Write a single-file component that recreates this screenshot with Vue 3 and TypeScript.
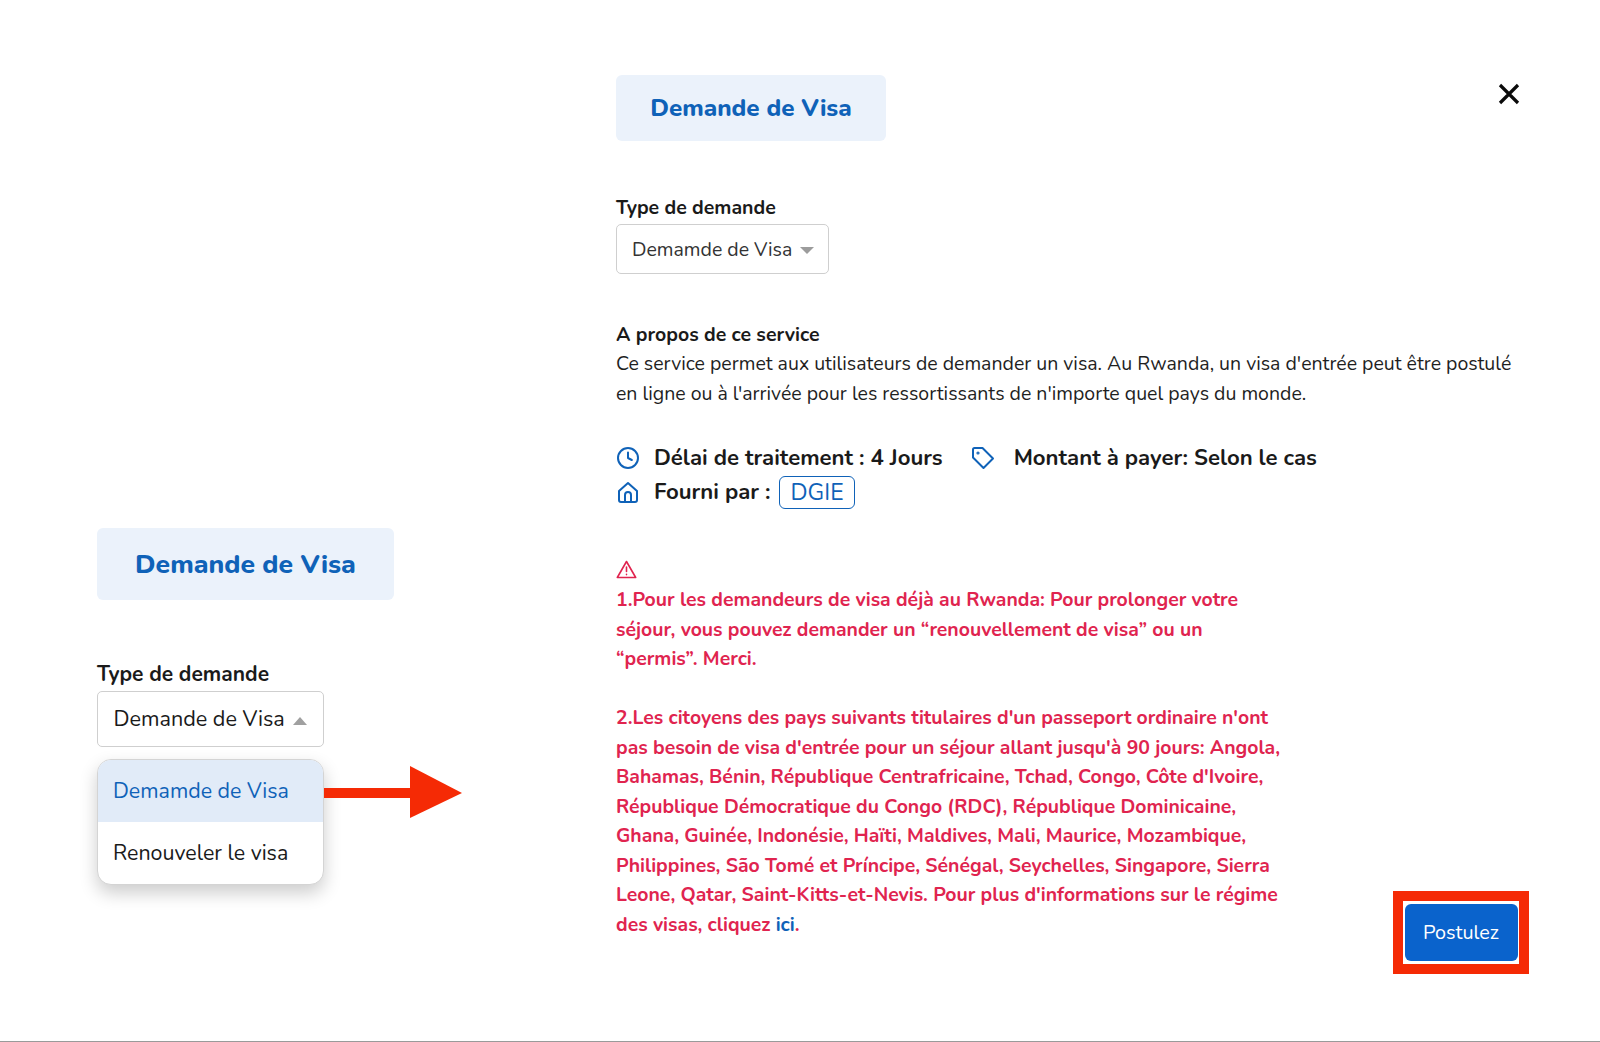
<script setup lang="ts">
const service = "Ce service permet aux utilisateurs de demander un visa. Au Rwanda, un visa d'entrée peut être postulé en ligne ou à l'arrivée pour les ressortissants de n'importe quel pays du monde."
const noteOne = "1.Pour les demandeurs de visa déjà au Rwanda: Pour prolonger votre séjour, vous pouvez demander un “renouvellement de visa” ou un “permis”. Merci."
const noteTwo = "2.Les citoyens des pays suivants titulaires d'un passeport ordinaire n'ont pas besoin de visa d'entrée pour un séjour allant jusqu'à 90 jours: Angola, Bahamas, Bénin, République Centrafricaine, Tchad, Congo, Côte d'Ivoire, République Démocratique du Congo (RDC), République Dominicaine, Ghana, Guinée, Indonésie, Haïti, Maldives, Mali, Maurice, Mozambique, Philippines, São Tomé et Príncipe, Sénégal, Seychelles, Singapore, Sierra Leone, Qatar, Saint-Kitts-et-Nevis. Pour plus d'informations sur le régime des visas, cliquez"
</script>

<template>
  <div class="page">
    <section class="left">
      <div class="banner banner-lg">Demande de Visa</div>
      <label class="label label-left">Type de demande</label>
      <div class="select select-lg">
        <span>Demande de Visa</span>
        <i class="caret caret-up"></i>
      </div>
      <div class="menu-wrap">
        <ul class="menu">
          <li class="active">Demamde de Visa</li>
          <li>Renouveler le visa</li>
        </ul>
        <svg class="arrow" width="138" height="52" viewBox="0 0 138 52">
          <rect x="0" y="22" width="90" height="10" fill="#f52a05" />
          <polygon points="86,0 138,27 86,52" fill="#f52a05" />
        </svg>
      </div>
    </section>

    <section class="right">
      <svg class="close" width="22" height="22" viewBox="0 0 22 22">
        <path d="M2 2 L20 20 M20 2 L2 20" stroke="#0a0a0a" stroke-width="3.2" fill="none" />
      </svg>
      <div class="banner">Demande de Visa</div>
      <label class="label">Type de demande</label>
      <div class="select">
        <span>Demamde de Visa</span>
        <i class="caret caret-down"></i>
      </div>

      <h3 class="about-title">A propos de ce service</h3>
      <p class="about">{{ service }}</p>

      <div class="facts">
        <div class="fact-row">
          <svg class="ico" width="24" height="24" viewBox="0 0 24 24" fill="none" stroke="#0f62b8" stroke-width="2" stroke-linecap="round" stroke-linejoin="round">
            <circle cx="12" cy="12" r="10" /><path d="M12 6.5V12l3.8 2" />
          </svg>
          <span>Délai de traitement : 4 Jours</span>
          <svg class="ico ico-tag" width="24" height="24" viewBox="0 0 24 24" fill="none" stroke="#0f62b8" stroke-width="2" stroke-linecap="round" stroke-linejoin="round">
            <path d="M2 3.5 A1.5 1.5 0 0 1 3.5 2 H11.5 L22 12.5 L12.5 22 L2 11.5 Z" /><circle cx="7" cy="7" r="0.6" />
          </svg>
          <span>Montant à payer: Selon le cas</span>
        </div>
        <div class="fact-row">
          <svg class="ico" width="24" height="24" viewBox="0 0 24 24" fill="none" stroke="#0f62b8" stroke-width="2" stroke-linecap="round" stroke-linejoin="round">
            <path d="M3 11 L12 3 L21 11 V20 A2 2 0 0 1 19 22 H5 A2 2 0 0 1 3 20 Z" /><path d="M9 22 V15 A3 3 0 0 1 15 15 V22" />
          </svg>
          <span>Fourni par :</span>
          <span class="tag">DGIE</span>
        </div>
      </div>

      <div class="bottom">
        <div class="warning">
          <svg class="warn-ico" width="21" height="19" viewBox="0 0 21 19" fill="none" stroke="#e0244f" stroke-width="1.6" stroke-linecap="round" stroke-linejoin="round">
            <path d="M10.5 1.5 L19.7 17.5 H1.3 Z" /><path d="M10.5 7 V11.5 M10.5 14.4 V14.6" />
          </svg>
          <p>{{ noteOne }}</p>
          <p class="gap">{{ noteTwo }} <a>ici</a>.</p>
        </div>
        <div class="cta-frame">
          <button class="cta">Postulez</button>
        </div>
      </div>
    </section>
  </div>
</template>

<style>
html, body { margin: 0; background: #fff; }
</style>

<style scoped>
.page {
  box-sizing: border-box;
  width: 1600px;
  height: 1042px;
  display: flex;
  font-family: "Nunito", "Lato", "Liberation Sans", sans-serif;
  color: #1a1a1a;
  border-bottom: 1px solid #9a9a9a;
  overflow: hidden;
}
.left {
  box-sizing: border-box;
  width: 616px;
  padding: 528px 0 0 97px;
  display: flex;
  flex-direction: column;
  align-items: flex-start;
}
.right {
  position: relative;
  flex: 1;
  padding-top: 75px;
  display: flex;
  flex-direction: column;
  align-items: flex-start;
}
.close { position: absolute; left: 882px; top: 83px; }
.banner {
  box-sizing: border-box;
  width: 270px;
  height: 66px;
  background: #ebf2fb;
  border-radius: 6px;
  color: #0f62b8;
  font-weight: 800;
  font-size: 24.2px;
  display: flex;
  align-items: center;
  justify-content: center;
}
.banner-lg { width: 297px; height: 72px; font-size: 26.5px; }
.label { font-weight: 700; font-size: 19.5px; line-height: 24px; margin-top: 55px; }
.label-left { font-size: 21px; margin-top: 62px; }
.select {
  box-sizing: border-box;
  width: 213px;
  height: 50px;
  margin-top: 4px;
  border: 1.5px solid #cfcfcf;
  border-radius: 5px;
  padding-left: 15px;
  display: flex;
  align-items: center;
  font-size: 19.5px;
  color: #333;
}
.select-lg { width: 227px; height: 56px; padding-left: 15.5px; font-size: 21.6px; color: #1a1a1a; margin-top: 5px; }
.caret { width: 0; height: 0; border-left: 7px solid transparent; border-right: 7px solid transparent; margin-left: 8px; }
.caret-down { border-top: 7px solid #9c9c9c; margin-top: 3px; }
.caret-up { border-bottom: 8px solid #a0a0a0; margin-top: 4px; }
.menu-wrap { position: relative; margin-top: 12px; }
.menu {
  box-sizing: border-box;
  width: 227px;
  height: 126px;
  list-style: none;
  margin: 0;
  padding: 0;
  border: 1px solid #d4d4d4;
  border-radius: 14px;
  overflow: hidden;
  background: #fff;
  box-shadow: 0 8px 18px rgba(0, 0, 0, 0.2);
  font-size: 21.4px;
}
.menu li {
  height: 62px;
  display: flex;
  align-items: center;
  padding-left: 15px;
}
.menu li.active { background: #e1ebf8; color: #0f62b8; }
.arrow { position: absolute; left: 227px; top: 7px; }
.about-title { margin: 49px 0 0; font-size: 19.5px; line-height: 24px; font-weight: 700; }
.about { margin: 2px 0 0; width: 910px; font-size: 19.5px; line-height: 29.5px; color: #1f1f1f; }
.facts { margin-top: 33px; font-size: 22.15px; font-weight: 700; }
.fact-row { display: flex; align-items: center; height: 34px; }
.ico { margin-right: 14px; flex: none; }
.ico-tag { margin: 0 19px 0 28px; }
.tag {
  box-sizing: border-box;
  margin-left: 9px;
  height: 33px;
  padding: 0 10px;
  display: flex;
  align-items: center;
  border: 1.5px solid #0f62b8;
  border-radius: 6px;
  color: #0f62b8;
  font-weight: 400;
  font-size: 23px;
}
.bottom {
  align-self: stretch;
  margin-top: 51px;
  display: flex;
  justify-content: space-between;
  align-items: flex-end;
}
.warning { width: 672px; color: #e0244f; font-weight: 700; font-size: 19.42px; line-height: 29.5px; }
.warn-ico { display: block; margin-bottom: 6px; }
.warning p { margin: 0; }
.warning .gap { margin-top: 29.5px; }
.warning a { color: #0f62b8; }
.cta-frame {
  box-sizing: border-box;
  width: 136px;
  height: 83px;
  margin: 0 71px -35px 0;
  border: 10px solid #f52a05;
  display: flex;
  align-items: center;
  justify-content: center;
}
.cta {
  width: 113px;
  height: 57px;
  border: 0;
  border-radius: 6px;
  background: #0a63cc;
  color: #fff;
  font: inherit;
  font-size: 19.8px;
}
</style>
